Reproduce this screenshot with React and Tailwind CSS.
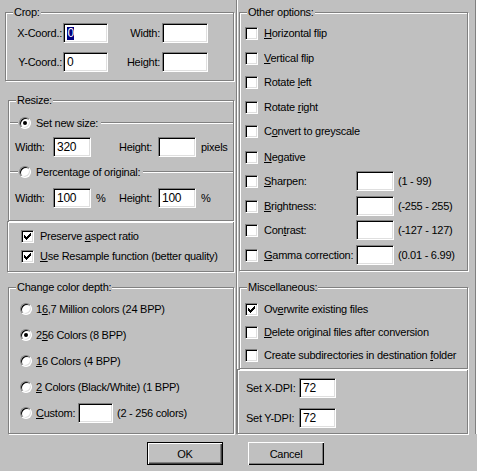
import React from "react";

const sunken =
  "border border-t-[#808080] border-l-[#808080] border-b-white border-r-white shadow-[inset_1px_1px_0_#000,inset_-1px_-1px_0_#dfdfdf]";

function Edit({ w, value, selected }) {
  return (
    <div className={`${w} h-[20px] shrink-0 bg-white ${sunken} flex items-center pl-[3px] text-[12px] leading-none text-black`}>
      {selected ? (
        <span className="bg-[#000080] text-white px-[0.5px] leading-[13px]">{value}</span>
      ) : (
        value
      )}
    </div>
  );
}

function CheckMark() {
  const rows = [
    [6, 1],
    [5, 2],
    [0, 1, 4, 3],
    [0, 2, 3, 3],
    [0, 5],
    [1, 3],
    [2, 1],
  ];
  return (
    <svg width="7" height="7" viewBox="0 0 7 7" shapeRendering="crispEdges">
      {rows.map((r, y) => {
        const out = [];
        for (let i = 0; i < r.length; i += 2) {
          out.push(<rect key={`${y}-${i}`} x={r[i]} y={y} width={r[i + 1]} height="1" fill="#000" />);
        }
        return out;
      })}
    </svg>
  );
}

function Check({ checked }) {
  return (
    <div className={`w-[13px] h-[13px] shrink-0 bg-white ${sunken} flex items-center justify-center`}>
      {checked && <CheckMark />}
    </div>
  );
}

function Radio({ checked }) {
  return (
    <div className="w-[12px] h-[12px] shrink-0 rounded-full bg-white border border-t-[#808080] border-l-[#808080] border-b-white border-r-white shadow-[inset_1px_1px_0_#000,inset_-1px_-1px_0_#dfdfdf] flex items-center justify-center">
      {checked && <div className="w-[4px] h-[4px] rounded-full bg-black" />}
    </div>
  );
}

const etched = "border border-[#808080] shadow-[1px_1px_0_#fff,inset_1px_1px_0_#fff]";

function Group({ label, className, children }) {
  return (
    <div className={`relative ${etched} ${className}`}>
      {label && (
        <span className="absolute left-[7px] top-[-8px] bg-[#c0c0c0] px-[1px] leading-[14px]">{label}</span>
      )}
      {children}
    </div>
  );
}

function RadioLine({ label, checked, className }) {
  return (
    <div className={`relative h-[2px] border-t border-t-[#808080] border-b border-b-white ${className}`}>
      <div className="absolute left-[8px] top-[-7px] flex items-center gap-[5px] bg-[#c0c0c0] px-[1px] pr-[3px] h-[14px]">
        <Radio checked={checked} />
        <span>{label}</span>
      </div>
    </div>
  );
}

function CheckRow({ checked, children, className = "" }) {
  return (
    <div className={`flex items-center h-[20px] gap-[6px] ${className}`}>
      <Check checked={checked} />
      <span className="whitespace-pre">{children}</span>
    </div>
  );
}

function RadioRow({ checked, children }) {
  return (
    <div className="flex items-center h-[20px] gap-[4px]">
      <Radio checked={checked} />
      <span className="whitespace-pre">{children}</span>
    </div>
  );
}

function Button({ children, def }) {
  return (
    <div
      className={`w-[76px] h-[23px] flex items-center justify-center bg-[#c0c0c0] ${
        def
          ? "border border-black shadow-[inset_1px_1px_0_#fff,inset_-1px_-1px_0_#404040,inset_-2px_-2px_0_#808080]"
          : "shadow-[inset_1px_1px_0_#fff,inset_-1px_-1px_0_#000,inset_-2px_-2px_0_#808080]"
      }`}
    >
      {children}
    </div>
  );
}

const U = ({ children }) => <u className="underline underline-offset-[1px]">{children}</u>;

export default function App() {
  const other = [
    { mt: "mt-[10px]", label: <><U>H</U>orizontal flip</> },
    { mt: "mt-[5px]", label: <><U>V</U>ertical flip</> },
    { mt: "mt-[4px]", label: <>Rotate <U>l</U>eft</> },
    { mt: "mt-[5px]", label: <>Rotate <U>r</U>ight</> },
    { mt: "mt-[4px]", label: <>C<U>o</U>nvert to greyscale</> },
    { mt: "mt-[6px]", label: <><U>N</U>egative</> },
  ];
  const ranged = [
    { mt: "mt-[4px]", label: <><U>S</U>harpen:</>, range: "(1 - 99)" },
    { mt: "mt-[5px]", label: <><U>B</U>rightness:</>, range: "(-255 - 255)" },
    { mt: "mt-[4px]", label: <>Con<U>t</U>rast:</>, range: "(-127 - 127)" },
    { mt: "mt-[5px]", label: <><U>G</U>amma correction:</>, range: "(0.01 - 6.99)" },
  ];
  return (
    <div className="w-[477px] h-[471px] bg-[#c0c0c0] text-black text-[11px] tracking-[-0.25px] leading-[14px] font-['Liberation_Sans',Arial,sans-serif] overflow-hidden">
      <div className="flex h-[434px]">
        {/* left column */}
        <div className="w-[236px] shrink-0">
          <Group label="Crop:" className="ml-[5px] mt-[12px] w-[229px] h-[69px]">
            <div className="pt-[10px]">
              <div className="flex items-center h-[20px]">
                <span className="w-[57px] text-right pr-[1px]">X-Coord.:</span>
                <Edit w="w-[45px]" value="0" selected />
                <span className="w-[54px] text-right pr-[2px]">Width:</span>
                <Edit w="w-[46px]" value="" />
              </div>
              <div className="flex items-center h-[20px] mt-[9px]">
                <span className="w-[57px] text-right pr-[1px]">Y-Coord.:</span>
                <Edit w="w-[45px]" value="0" />
                <span className="w-[54px] text-right pr-[2px]">Height:</span>
                <Edit w="w-[46px]" value="" />
              </div>
            </div>
          </Group>

          <Group label="Resize:" className="ml-[8px] mt-[19px] w-[226px] h-[121px]">
            <RadioLine label="Set new size:" checked className="mt-[21px] ml-[1px]" />
            <div className="flex items-center h-[20px] mt-[13px] pl-[6px]">
              <span className="w-[38px]">Width:</span>
              <Edit w="w-[38px]" value="320" />
              <span className="w-[28px]" />
              <span className="w-[39px]">Height:</span>
              <Edit w="w-[38px]" value="" />
              <span className="ml-[5px]">pixels</span>
            </div>
            <RadioLine label="Percentage of original:" className="mt-[14px] ml-[1px]" />
            <div className="flex items-center h-[20px] mt-[15px] pl-[6px]">
              <span className="w-[38px]">Width:</span>
              <Edit w="w-[38px]" value="100" />
              <span className="w-[28px] pl-[5px]">%</span>
              <span className="w-[39px]">Height:</span>
              <Edit w="w-[38px]" value="100" />
              <span className="ml-[5px]">%</span>
            </div>
          </Group>

          <div className={`ml-[7px] w-[227px] h-[51px] ${etched}`}>
            <div className="pl-[13px] pt-[4px]">
              <CheckRow checked>
                Preserve <U>a</U>spect ratio
              </CheckRow>
              <CheckRow checked>
                <U>U</U>se Resample function (better quality)
              </CheckRow>
            </div>
          </div>

          <Group label="Change color depth:" className="ml-[8px] mt-[15px] w-[226px] h-[147px]">
            <div className="pl-[11px] pt-[11px] flex flex-col gap-[6px]">
              <RadioRow>
                1<U>6</U>,7 Million colors (24 BPP)
              </RadioRow>
              <RadioRow checked>
                2<U>5</U>6 Colors (8 BPP)
              </RadioRow>
              <RadioRow>
                <U>1</U>6 Colors (4 BPP)
              </RadioRow>
              <RadioRow>
                <U>2</U> Colors (Black/White) (1 BPP)
              </RadioRow>
              <div className="flex items-center h-[20px]">
                <Radio />
                <span className="w-[46px] pl-[4px]">
                  <U>C</U>ustom:
                </span>
                <Edit w="w-[35px]" value="" />
                <span className="ml-[4px]">(2 - 256 colors)</span>
              </div>
            </div>
          </Group>
        </div>

        {/* right column */}
        <div className="w-[240px] shrink-0 border-l border-l-[#808080] border-r border-r-[#808080] shadow-[inset_1px_0_0_#fff,1px_0_0_#fff]">
          <Group label="Other options:" className="ml-[2px] mt-[12px] w-[229px] h-[259px]">
            <div className="pl-[5px]">
              {other.map((o, i) => (
                <CheckRow key={i} className={o.mt}>
                  {o.label}
                </CheckRow>
              ))}
              {ranged.map((o, i) => (
                <div key={i} className={`flex items-center h-[20px] ${o.mt}`}>
                  <Check />
                  <span className="w-[98px] pl-[6px] whitespace-nowrap">{o.label}</span>
                  <Edit w="w-[38px]" value="" />
                  <span className="ml-[4px] whitespace-nowrap">{o.range}</span>
                </div>
              ))}
            </div>
          </Group>

          <Group label="Miscellaneous:" className="ml-[2px] mt-[16px] w-[229px] h-[82px]">
            <div className="pl-[5px] pt-[11px] flex flex-col gap-[3px]">
              <CheckRow checked>
                Ov<U>e</U>rwrite existing files
              </CheckRow>
              <CheckRow>
                <U>D</U>elete original files after conversion
              </CheckRow>
              <CheckRow>
                Create subdirectories in destination <U>f</U>older
              </CheckRow>
            </div>
          </Group>

          <div className={`w-[231px] h-[65px] ${etched}`}>
            <div className="pl-[8px] pt-[8px] flex flex-col gap-[10px]">
              <div className="flex items-center h-[20px]">
                <span className="w-[53px] whitespace-nowrap">Set X-DPI:</span>
                <Edit w="w-[37px]" value="72" />
              </div>
              <div className="flex items-center h-[20px]">
                <span className="w-[53px] whitespace-nowrap">Set Y-DPI:</span>
                <Edit w="w-[37px]" value="72" />
              </div>
            </div>
          </div>
        </div>
      </div>

      <div className="flex pl-[147px] gap-[25px] mt-[8px]">
        <Button def>OK</Button>
        <Button>Cancel</Button>
      </div>
    </div>
  );
}
